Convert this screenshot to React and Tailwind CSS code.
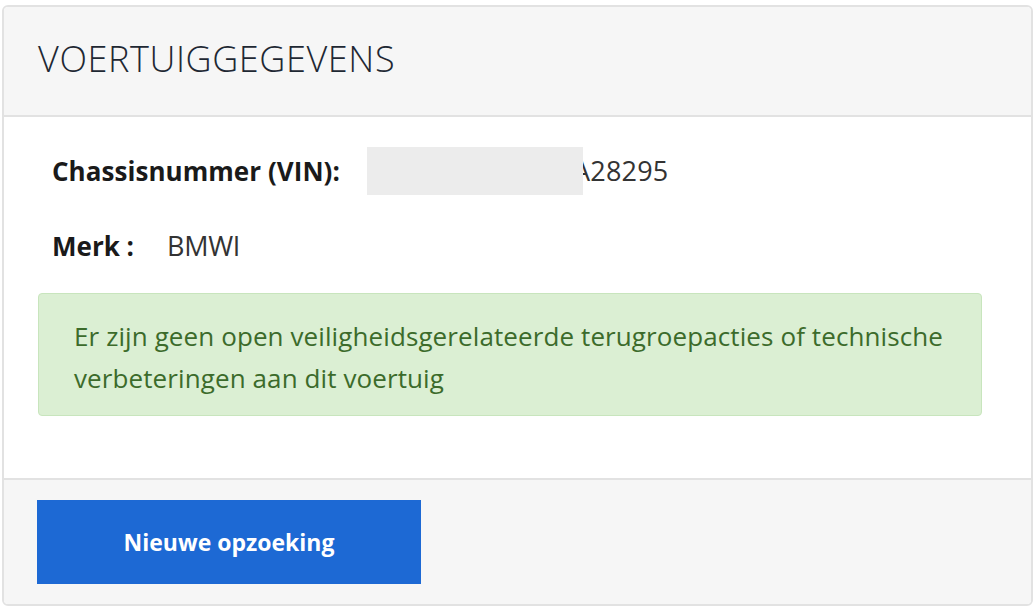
export default function App() {
  return (
    <div className="w-[1035px] h-[612px] bg-white pt-[5px] pl-[2px]" style={{ fontFamily: '"Open Sans", "Liberation Sans", sans-serif' }}>
      <div className="w-[1031px] h-[601px] border-2 border-[#e2e2e2] rounded-[6px] overflow-hidden flex flex-col">
        <div className="h-[110px] shrink-0 bg-[#f6f6f6] border-b-2 border-[#e2e2e2] flex items-center pl-[34px] pb-[4px]">
          <h1 className="text-[36px] font-light text-[#1e2833] tracking-[0.6px]">VOERTUIGGEGEVENS</h1>
        </div>
        <div className="flex-1 bg-white pl-[34px] pr-[49px] pt-[29px]">
          <div className="flex items-center pl-[14px] h-[50px]">
            <span className="text-[26px] font-bold text-[#1a1a1a] w-[315px] tracking-[0.05px]">Chassisnummer (VIN):</span>
            <span className="relative flex items-center">
              <span className="relative z-10 w-[216px] h-[48px] bg-[#ececec]"></span>
              <span className="text-[27px] text-[#333] -ml-[10px] tracking-[0.2px]">A28295</span>
            </span>
          </div>
          <div className="flex items-center pl-[14px] mt-[36px] h-[28px]">
            <span className="text-[26px] font-bold text-[#1a1a1a] w-[115px]">Merk :</span>
            <span className="text-[27px] text-[#333] tracking-[-0.3px]">BMWI</span>
          </div>
          <div className="mt-[33px] h-[123px] bg-[#dbefd3] border border-[#c8e5bd] rounded-[4px] pl-[35px] pr-[30px] pt-[21px] text-[#3c6b2b] text-[26px] leading-[42px] tracking-[0.1px]">
            Er zijn geen open veiligheidsgerelateerde terugroepacties of technische verbeteringen aan dit voertuig
          </div>
        </div>
        <div className="h-[126px] shrink-0 bg-[#f6f6f6] border-t-2 border-[#e2e2e2] pl-[33px] pt-[20px]">
          <button className="w-[384px] h-[84px] bg-[#1d69d4] text-white text-[23px] font-bold">Nieuwe opzoeking</button>
        </div>
      </div>
    </div>
  );
}
